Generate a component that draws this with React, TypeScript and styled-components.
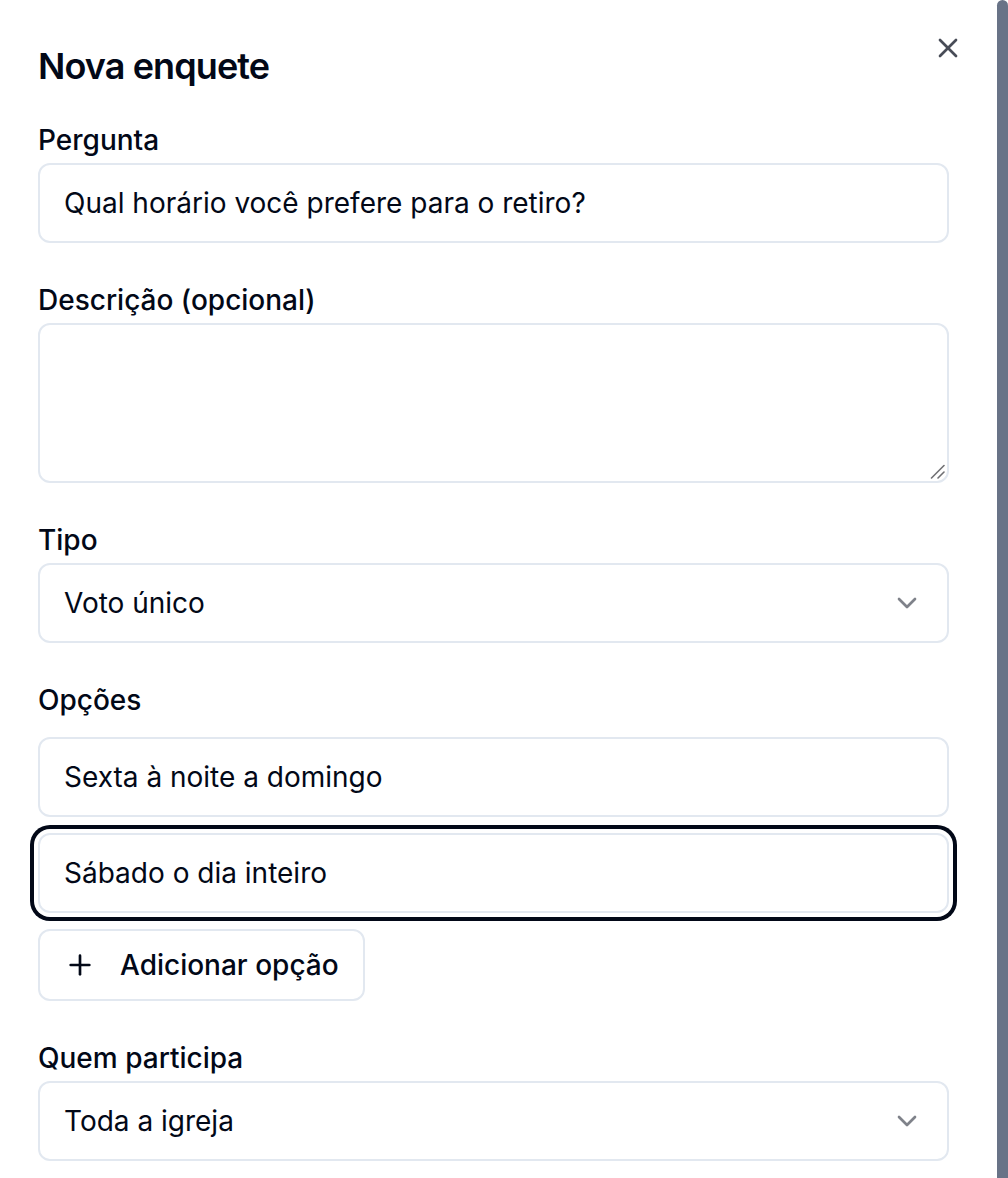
import React from "react";
import styled, { createGlobalStyle } from "styled-components";
import { X, ChevronDown, Plus } from "lucide-react";

const Global = createGlobalStyle`
  html, body {
    margin: 0;
    padding: 0;
    background: #ffffff;
  }
  body {
    font-family: Inter, "Noto Sans", "Liberation Sans", sans-serif;
    color: #020817;
    -webkit-font-smoothing: antialiased;
  }
  *, *::before, *::after {
    box-sizing: border-box;
  }
`;

const Screen = styled.div`
  display: flex;
  width: 1008px;
  height: 1178px;
  overflow: hidden;
  background: #ffffff;
`;

const Dialog = styled.section`
  flex: 1;
  min-width: 0;
  padding: 48px 48px 0 38px;
  display: flex;
  flex-direction: column;
`;

const ScrollThumb = styled.div`
  flex: none;
  width: 11px;
  height: 100%;
  background: #687387;
  border-radius: 6px 6px 0 0;
`;

const Header = styled.header`
  display: flex;
  align-items: flex-start;
  justify-content: space-between;
`;

const Title = styled.h2`
  margin: 0;
  font-size: 36px;
  line-height: 36px;
  font-weight: 600;
  letter-spacing: -0.9px;
  color: #020817;
`;

const CloseButton = styled.button`
  display: flex;
  align-items: center;
  justify-content: center;
  width: 32px;
  height: 32px;
  margin: -16px -15px 0 0;
  padding: 0;
  border: none;
  background: transparent;
  color: #020817;
  opacity: 0.72;
  cursor: pointer;
`;

const Form = styled.form`
  display: flex;
  flex-direction: column;
  gap: 43px;
  margin-top: 42px;
`;

const FieldGroup = styled.div<{ $gap?: number }>`
  display: flex;
  flex-direction: column;
  gap: ${(p) => p.$gap ?? 9}px;
`;

const Label = styled.label`
  display: block;
  font-size: 28px;
  line-height: 28px;
  font-weight: 500;
  color: #020817;
`;

const fieldBase = `
  width: 100%;
  border: 2px solid #e2e8f0;
  border-radius: 12px;
  background: #ffffff;
  font-family: Inter, "Noto Sans", "Liberation Sans", sans-serif;
  font-size: 28px;
  color: #020817;
  outline: none;
`;

const TextInput = styled.input<{ $focused?: boolean }>`
  ${fieldBase}
  height: 80px;
  padding: 0 24px;
  line-height: 40px;
  box-shadow: ${(p) => (p.$focused ? "0 0 0 4px #ffffff, 0 0 0 8px #020817" : "none")};
`;

const TextAreaWrap = styled.div`
  position: relative;
  height: 160px;
`;

const TextArea = styled.textarea`
  ${fieldBase}
  display: block;
  height: 160px;
  padding: 16px 24px;
  line-height: 40px;
  resize: none;
`;

const ResizeHandle = styled.svg`
  position: absolute;
  right: 4px;
  bottom: 4px;
  width: 15px;
  height: 15px;
  pointer-events: none;
`;

const SelectTrigger = styled.button`
  ${fieldBase}
  display: flex;
  align-items: center;
  justify-content: space-between;
  height: 80px;
  padding: 0 24px;
  text-align: left;
  line-height: 40px;
  cursor: pointer;
`;

const Chevron = styled(ChevronDown)`
  flex: none;
  opacity: 0.5;
`;

const OptionsList = styled.div`
  display: flex;
  flex-direction: column;
  gap: 16px;
`;

const AddButton = styled.button`
  align-self: flex-start;
  display: inline-flex;
  align-items: center;
  gap: 24px;
  height: 72px;
  padding: 0 24px;
  border: 2px solid #e2e8f0;
  border-radius: 12px;
  background: #ffffff;
  font-family: Inter, "Noto Sans", "Liberation Sans", sans-serif;
  font-size: 28px;
  font-weight: 500;
  color: #020817;
  cursor: pointer;
`;

export default function App() {
  return (
    <Screen>
      <Global />
      <Dialog>
        <Header>
          <Title>Nova enquete</Title>
          <CloseButton type="button" aria-label="Fechar">
            <X size={32} strokeWidth={2} />
          </CloseButton>
        </Header>
        <Form onSubmit={(e) => e.preventDefault()}>
          <FieldGroup>
            <Label htmlFor="pergunta">Pergunta</Label>
            <TextInput id="pergunta" defaultValue="Qual horário você prefere para o retiro?" />
          </FieldGroup>
          <FieldGroup>
            <Label htmlFor="descricao">Descrição (opcional)</Label>
            <TextAreaWrap>
              <TextArea id="descricao" />
              <ResizeHandle viewBox="0 0 15 15">
                <path d="M1.5 14 L14 1.5" stroke="#6f6f73" strokeWidth="1.6" strokeLinecap="round" />
                <path d="M8 14 L14 8" stroke="#6f6f73" strokeWidth="1.6" strokeLinecap="round" />
              </ResizeHandle>
            </TextAreaWrap>
          </FieldGroup>
          <FieldGroup>
            <Label>Tipo</Label>
            <SelectTrigger type="button">
              <span>Voto único</span>
              <Chevron size={32} strokeWidth={2} />
            </SelectTrigger>
          </FieldGroup>
          <FieldGroup $gap={23}>
            <Label>Opções</Label>
            <OptionsList>
              <TextInput defaultValue="Sexta à noite a domingo" />
              <TextInput $focused defaultValue="Sábado o dia inteiro" />
              <AddButton type="button">
                <Plus size={32} strokeWidth={2} />
                Adicionar opção
              </AddButton>
            </OptionsList>
          </FieldGroup>
          <FieldGroup>
            <Label>Quem participa</Label>
            <SelectTrigger type="button">
              <span>Toda a igreja</span>
              <Chevron size={32} strokeWidth={2} />
            </SelectTrigger>
          </FieldGroup>
        </Form>
      </Dialog>
      <ScrollThumb />
    </Screen>
  );
}
